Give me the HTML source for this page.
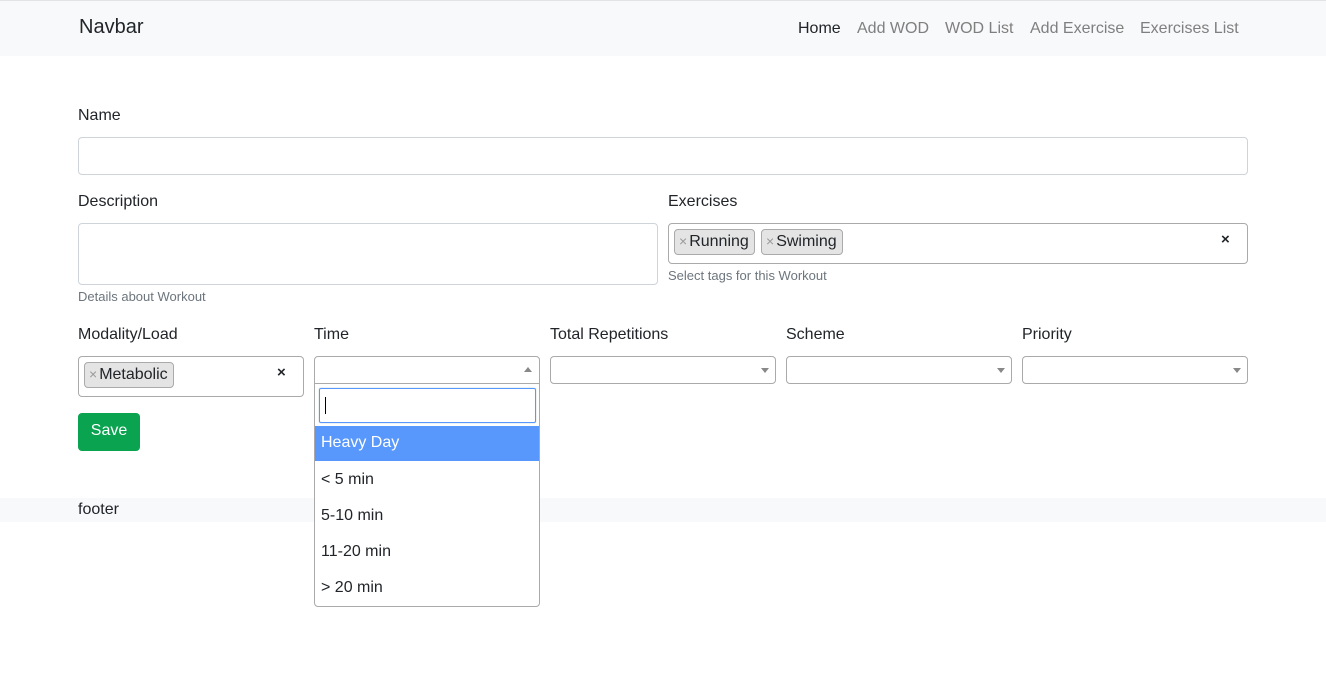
<!DOCTYPE html>
<html><head><style>
*{box-sizing:border-box;margin:0;padding:0}
body{width:1326px;height:682px;position:relative;font-family:"Liberation Sans",sans-serif;color:#212529;background:#fff;font-size:16px;overflow:hidden}
.a{position:absolute}
.lbl{position:absolute;font-size:16px;line-height:20px}
.box{position:absolute;border:1px solid #ced4da;border-radius:4px;background:#fff}
.sbox{position:absolute;border:1px solid #aaa;border-radius:4px;background:#fff}
.help{position:absolute;font-size:13px;color:#6c757d;line-height:16px}
.tag{position:absolute;background:#e4e4e4;border:1px solid #aaa;border-radius:4px;height:26px;line-height:23px;padding:0 5px 0 4px;font-size:16px}
.tag span{color:#999;font-size:14px;margin-right:2px}
.x{position:absolute;font-weight:bold;font-size:15px}
.arr{position:absolute;width:0;height:0;border-left:4px solid transparent;border-right:4px solid transparent;border-top:5px solid #888}
.nav{position:absolute;top:19px;font-size:16px;color:#7f7f7f;line-height:20px}
.it{position:absolute;left:315px;width:224px;height:36px;line-height:36px;padding-left:6px}
</style></head><body>
<div class="a" style="left:0;top:0;width:1326px;height:1px;background:#e3e3e3"></div>
<div class="a" style="left:0;top:1px;width:1326px;height:55px;background:#f8f9fa"></div>
<div class="a" style="left:79px;top:15px;font-size:20px;line-height:24px">Navbar</div>
<div class="nav" style="left:798px;color:#212529">Home</div>
<div class="nav" style="left:857px">Add WOD</div>
<div class="nav" style="left:945px">WOD List</div>
<div class="nav" style="left:1030px">Add Exercise</div>
<div class="nav" style="left:1140px">Exercises List</div>

<div class="lbl" style="left:78px;top:106px">Name</div>
<div class="box" style="left:78px;top:137px;width:1170px;height:38px"></div>
<div class="lbl" style="left:78px;top:192px">Description</div>
<div class="box" style="left:78px;top:223px;width:580px;height:62px"></div>
<div class="help" style="left:78px;top:289px">Details about Workout</div>
<div class="lbl" style="left:668px;top:192px">Exercises</div>
<div class="sbox" style="left:668px;top:223px;width:580px;height:41px"></div>
<div class="tag" style="left:674px;top:229px"><span>×</span>Running</div>
<div class="tag" style="left:761px;top:229px"><span>×</span>Swiming</div>
<div class="x" style="left:1221px;top:231px">×</div>
<div class="help" style="left:668px;top:268px">Select tags for this Workout</div>

<div class="lbl" style="left:78px;top:325px">Modality/Load</div>
<div class="lbl" style="left:314px;top:325px">Time</div>
<div class="lbl" style="left:550px;top:325px">Total Repetitions</div>
<div class="lbl" style="left:786px;top:325px">Scheme</div>
<div class="lbl" style="left:1022px;top:325px">Priority</div>
<div class="sbox" style="left:78px;top:356px;width:226px;height:41px"></div>
<div class="tag" style="left:84px;top:362px"><span>×</span>Metabolic</div>
<div class="x" style="left:277px;top:364px">×</div>

<div class="sbox" style="left:314px;top:356px;width:226px;height:28px;border-radius:4px 4px 0 0"></div>
<div class="a" style="left:524px;top:367px;width:0;height:0;border-left:4px solid transparent;border-right:4px solid transparent;border-bottom:5px solid #888"></div>
<div class="sbox" style="left:314px;top:383px;width:226px;height:224px;border-radius:0 0 4px 4px"></div>
<div class="a" style="left:319px;top:388px;width:217px;height:35px;border:1px solid #5897fb;border-radius:2px;box-shadow:0 0 1px #8ab"></div>
<div class="a" style="left:325px;top:397px;width:1px;height:17px;background:#000"></div>
<div class="it" style="top:426px;background:#5897fb;color:#fff;line-height:34px;height:35px">Heavy Day</div>
<div class="it" style="top:462px">&lt; 5 min</div>
<div class="it" style="top:498px">5-10 min</div>
<div class="it" style="top:534px">11-20 min</div>
<div class="it" style="top:570px">&gt; 20 min</div>

<div class="sbox" style="left:550px;top:356px;width:226px;height:28px"></div>
<div class="arr" style="left:761px;top:368px"></div>
<div class="sbox" style="left:786px;top:356px;width:226px;height:28px"></div>
<div class="arr" style="left:997px;top:368px"></div>
<div class="sbox" style="left:1022px;top:356px;width:226px;height:28px"></div>
<div class="arr" style="left:1233px;top:368px"></div>

<div class="a" style="left:78px;top:413px;width:62px;height:38px;background:#0aa350;border-radius:4px;color:#fff;line-height:36px;text-align:center">Save</div>

<div class="a" style="left:0;top:498px;width:314px;height:24px;background:#f8f9fa"></div>
<div class="a" style="left:540px;top:498px;width:786px;height:24px;background:#f8f9fa"></div>
<div class="a" style="left:78px;top:500px;line-height:20px">footer</div>
</body></html>
